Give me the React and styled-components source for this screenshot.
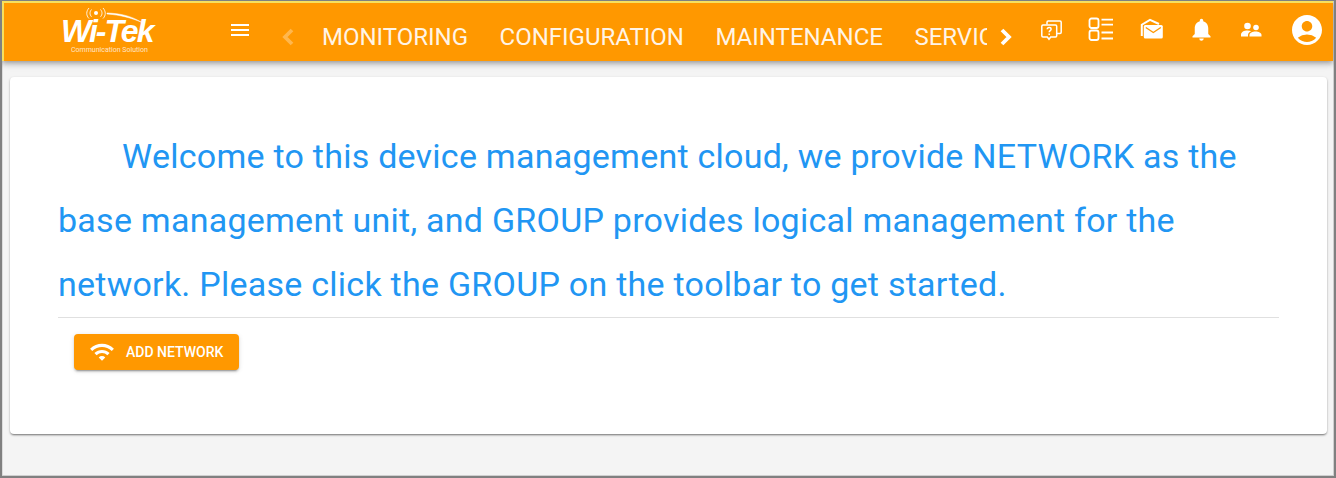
import styled, { createGlobalStyle } from "styled-components"
import { MdMenu, MdNotifications, MdAccountCircle, MdWifi } from "react-icons/md"

const GlobalStyle = createGlobalStyle`
    html, body {
        margin: 0;
        padding: 0;
    }
    body {
        background: #f4f4f4;
        font-family: Roboto, "Liberation Sans", sans-serif;
    }
`

const tabs = ["MONITORING", "CONFIGURATION", "MAINTENANCE", "SERVICE"]

function QuestionIcon() {
    return (
        <svg width="22" height="22" viewBox="0 0 22 22" fill="none" stroke="#fff" strokeWidth="1.5">
            <path d="M7 5.500V3.200C7 2.500 7.500 2 8.200 2H20c.7 0 1.200.5 1.200 1.200v10.100c0 .7-.5 1.200-1.200 1.200h-3" />
            <path d="M3 6h12.500c.7 0 1.200.5 1.200 1.200v9.600c0 .7-.5 1.200-1.200 1.200h-4.800L9 20.200 7.300 18H3c-.7 0-1.200-.5-1.200-1.200V7.200C1.800 6.500 2.300 6 3 6z" />
            <path d="M7.300 10.300c0-1.100.8-1.800 1.900-1.800s1.900.7 1.900 1.700c0 1.400-1.900 1.500-1.900 3" />
            <path d="M9.200 14.400v1.500" />
        </svg>
    )
}

function ListIcon() {
    return (
        <svg width="26" height="26" viewBox="0 0 26 26" fill="none" stroke="#fff" strokeWidth="1.8">
            <rect x="1.500" y="1.500" width="9" height="9.500" rx="2" />
            <rect x="1.500" y="13.500" width="9" height="9.500" rx="2" />
            <path d="M13.500 2.700H25M13.500 7.700H25M13.500 15.500H25M13.500 21.500H25" />
        </svg>
    )
}

function MailIcon() {
    return (
        <svg width="24" height="24" viewBox="0 0 24 24" fill="none">
            <path d="M2.800 18V6.700L11 1.800l9 4.200" stroke="#fff" strokeWidth="2" />
            <rect x="4.800" y="7" width="19" height="13.500" rx="1.500" fill="#fff" />
            <path d="M6.800 9.500l7.500 5 7.500-5" stroke="#ff9800" strokeWidth="1.400" />
        </svg>
    )
}

function PeopleIcon() {
    return (
        <svg width="24" height="24" viewBox="0 0 24 24" fill="#fff">
            <circle cx="8.500" cy="8" r="3.300" />
            <circle cx="17" cy="9.500" r="2.800" />
            <path d="M2 18.500v-1.800C2 14 5 12.500 8.500 12.500c1.500 0 2.800.3 3.900.8C10.500 14 9 15.200 9 17v1.500z" />
            <path d="M10.500 18.500V17c0-2.200 3-3.500 6-3.500s6 1.300 6 3.500v1.500z" />
        </svg>
    )
}

function Chevron({ left }) {
    return (
        <svg width="30" height="30" viewBox="0 0 30 30" fill="none" stroke="currentColor" strokeWidth="3.800">
            <path d={left ? "M19 8l-7 7 7 7" : "M11 8l7 7-7 7"} />
        </svg>
    )
}

function LogoMark() {
    return (
        <LogoArcs width="100" height="26" viewBox="0 0 100 26" fill="none" stroke="#fff">
            <circle cx="35" cy="5" r="2" fill="#fff" stroke="none" />
            <path d="M30.500 1.500c-2 2.300-2 5 0 7.300M39.500 1.500c2 2.300 2 5 0 7.300M28 0c-3 3.300-3 7.500 0 10.500M42 0c3 3.300 3 7.500 0 10.500" strokeWidth="1" opacity=".85" />
            <path d="M46 5C60 5.500 70 8 80 14C70 10 60 7 46 6z" fill="#fff" strokeWidth=".5" />
        </LogoArcs>
    )
}

export default function App() {
    return (
        <>
            <GlobalStyle />
            <Frame>
                <Toolbar>
                    <Logo>
                        <LogoMark />
                        <LogoName>Wi-Tek</LogoName>
                        <LogoTag>Communication Solution</LogoTag>
                    </Logo>
                    <MenuButton><MdMenu size={24} /></MenuButton>
                    <Arrow $off><Chevron left /></Arrow>
                    <Tabs>
                        {tabs.map((t) => <Tab key={t}>{t}</Tab>)}
                    </Tabs>
                    <Arrow><Chevron /></Arrow>
                    <Icons>
                        <IconSlot><QuestionIcon /></IconSlot>
                        <IconSlot><ListIcon /></IconSlot>
                        <IconSlot><MailIcon /></IconSlot>
                        <IconSlot><MdNotifications size={27} /></IconSlot>
                        <IconSlot><PeopleIcon /></IconSlot>
                        <Account><MdAccountCircle size={36} /></Account>
                    </Icons>
                </Toolbar>
                <Content>
                    <Card>
                        <Welcome>
                            Welcome to this device management cloud, we provide NETWORK as the base management unit, and GROUP provides logical management for the network. Please click the GROUP on the toolbar to get started.
                        </Welcome>
                        <Divider />
                        <AddButton>
                            <MdWifi size={26} />
                            <span>ADD NETWORK</span>
                        </AddButton>
                    </Card>
                </Content>
            </Frame>
        </>
    )
}

const Frame = styled.div`
    width: 1336px;
    height: 478px;
    box-sizing: border-box;
    display: flex;
    flex-direction: column;
    overflow: hidden;
    padding: 0 1px 1px 0;
    background: #cfcfcf;
    border-style: solid;
    border-width: 1px 2px 2px 2px;
    border-color: #808080;
`
const Toolbar = styled.header`
    height: 60px;
    box-sizing: border-box;
    flex: none;
    display: flex;
    align-items: center;
    background: #ff9800;
    color: #fff;
    border-top: 2px solid #f6e05e;
    border-left: 2px solid #f6e05e;
    box-shadow: 0 2px 4px -1px rgba(0,0,0,.2), 0 4px 5px rgba(0,0,0,.14), 0 1px 10px rgba(0,0,0,.12);
    position: relative;
    z-index: 1;
`
const Logo = styled.div`
    width: 209px;
    height: 58px;
    flex: none;
    position: relative;
    margin-right: 15px;
`
const LogoArcs = styled.svg`
    position: absolute;
    left: 57px;
    top: 5px;
`
const LogoName = styled.span`
    position: absolute;
    left: 57px;
    top: 15px;
    font: italic 700 32px/26px "Liberation Sans", sans-serif;
    letter-spacing: -2px;
`
const LogoTag = styled.span`
    position: absolute;
    left: 67px;
    top: 43px;
    font: 400 7px/8px Roboto, sans-serif;
    white-space: nowrap;
    opacity: .75;
`
const MenuButton = styled.div`
    width: 24px;
    height: 24px;
    margin-right: 21px;
    margin-top: -5px;
    svg { display: block; }
`
const Arrow = styled.div`
    width: 30px;
    height: 30px;
    flex: none;
    margin-top: 10px;
    color: ${(p) => (p.$off ? "rgba(255,255,255,.3)" : "#fff")};
    svg { display: block; }
`
const Tabs = styled.nav`
    width: 665px;
    flex: none;
    margin: 10px 4px 0 19px;
    display: flex;
    gap: 31.500px;
    overflow: hidden;
`
const Tab = styled.div`
    font-size: 24px;
    line-height: 32px;
    white-space: nowrap;
    color: #fff;
    opacity: .9;
`
const Icons = styled.div`
    margin-left: auto;
    display: flex;
    align-items: center;
    margin-top: -5px;
`
const IconSlot = styled.div`
    width: 50px;
    display: flex;
    justify-content: center;
    align-items: center;
    svg { display: block; }
`
const Account = styled(IconSlot)`
    width: 52px;
    margin-left: 5px;
`
const Content = styled.main`
    flex: 1;
    padding: 16px 6px 0 7px;
    background: #f4f4f4;
    border-left: 1px solid #dcdcdc;
`
const Card = styled.section`
    height: 357px;
    box-sizing: border-box;
    padding: 47px 48px 0 48px;
    background: #fff;
    border-radius: 4px;
    box-shadow: 0 2px 2px -1px rgba(0,0,0,.3), 0 1px 2px rgba(0,0,0,.2), 0 1px 3px rgba(0,0,0,.12);
`
const Welcome = styled.p`
    margin: 0 0 1px;
    font-size: 34px;
    line-height: 64px;
    letter-spacing: .25px;
    text-indent: 64px;
    color: #2196f3;
`
const Divider = styled.hr`
    margin: 0;
    border: none;
    border-top: 1px solid rgba(0,0,0,.12);
`
const AddButton = styled.button`
    margin: 16px 0 0 16px;
    width: 165px;
    height: 36px;
    display: flex;
    align-items: center;
    gap: 11px;
    padding: 0 0 0 15px;
    border: none;
    border-radius: 4px;
    background: #ff9800;
    color: #fff;
    font: 500 14px/36px Roboto, sans-serif;
    box-shadow: 0 3px 1px -2px rgba(0,0,0,.2), 0 2px 2px rgba(0,0,0,.14), 0 1px 5px rgba(0,0,0,.12);
    svg { flex: none; }
`
